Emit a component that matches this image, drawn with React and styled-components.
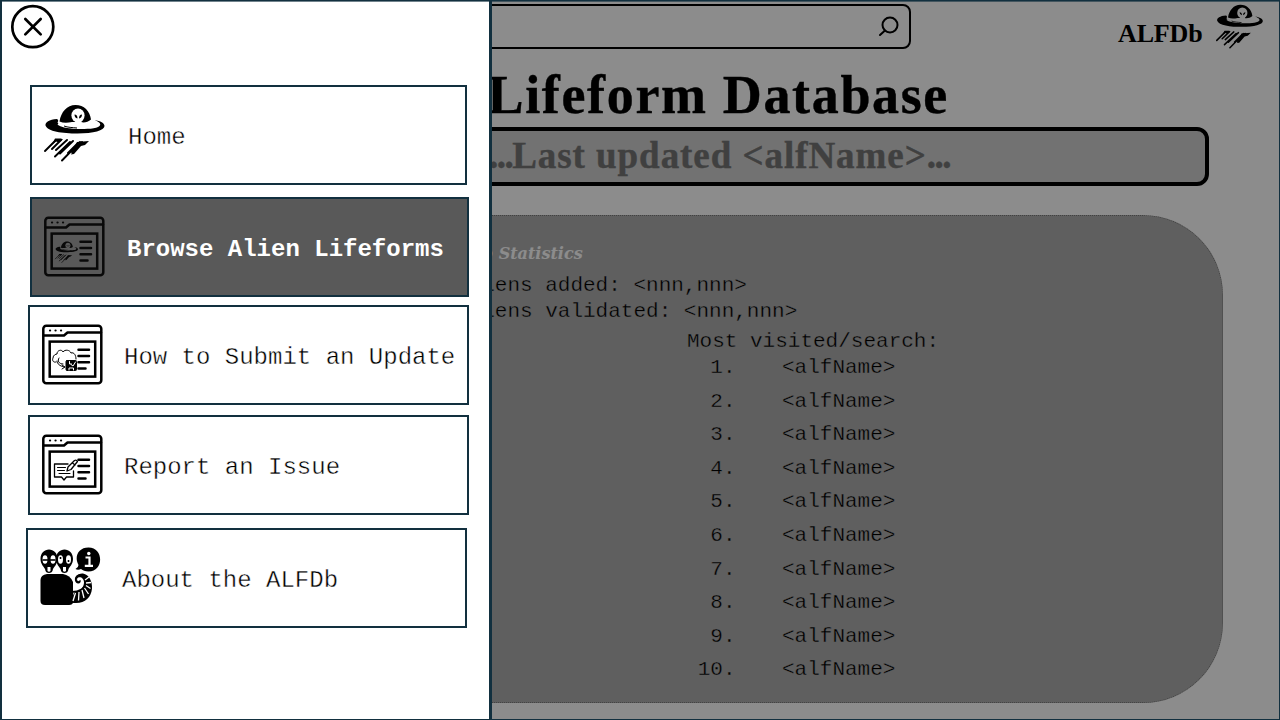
import React from "react";
import styled, { createGlobalStyle } from "styled-components";

const mono = '"Liberation Mono", "Courier New", monospace';
const display = '"Liberation Serif", "Times New Roman", serif';
const teal = "#12303f";

const Global = createGlobalStyle`
  *, *::before, *::after { box-sizing: border-box; }
  body { margin: 0; background: #fff; font-family: ${mono}; }
  h1, h2, p, ul, ol { margin: 0; padding: 0; list-style: none; }
`;

const Screen = styled.div`
  position: relative;
  width: 1280px;
  height: 720px;
  overflow: hidden;
  background: #fff;
`;

const Page = styled.div`
  height: 720px;
  padding: 4px 16px 16px 0;
  display: flex;
  flex-direction: column;
`;

const Header = styled.header`
  display: flex;
  height: 46px;
  justify-content: flex-end;
`;

const SearchBox = styled.div`
  width: 600px;
  height: 45px;
  margin-right: 207px;
  border: 2px solid #000;
  border-radius: 8px;
  display: flex;
  align-items: center;
  justify-content: flex-end;
  padding-right: 10px;
`;

const Brand = styled.div`
  display: flex;
  gap: 13px;
  width: 146px;
  font: bold 26px/30px ${display};
  white-space: nowrap;
`;

const BrandName = styled.span`
  padding-top: 15px;
  letter-spacing: -0.15px;
`;

const Title = styled.h1`
  height: 77px;
  padding: 14px 315px 0 0;
  text-align: right;
  white-space: nowrap;
  font: bold 54px/62px ${display};
  letter-spacing: 1.65px;
  -webkit-text-stroke: 0.4px #000;
`;

const UpdatedBar = styled.p`
  align-self: flex-end;
  width: 1137px;
  height: 59px;
  margin-right: 55px;
  padding-right: 255px;
  border: 4px solid #000;
  border-radius: 12px;
  background: #cfcfcf;
  color: #757575;
  text-align: right;
  white-space: nowrap;
  font: bold 37px/49px ${display};
  letter-spacing: 0.95px;
  -webkit-text-stroke: 0.4px #757575;
`;

const Dots = styled.span`
  letter-spacing: -1.5px;
`;

const StatsPanel = styled.section`
  align-self: flex-end;
  width: 1165px;
  height: 488px;
  margin: 29px 41px 0 0;
  padding: 27px 0 0 374px;
  border: 1px dotted #777;
  border-radius: 80px;
  background: #aeaeae;
  font-size: 21px;
  -webkit-text-stroke: 0.35px #aeaeae;
`;

const StatsTitle = styled.h2`
  color: #fff;
  font: italic bold 16px/22px "DejaVu Serif", serif;
  height: 30px;
  white-space: nowrap;
  -webkit-text-stroke: 0;
`;

const Stat = styled.p`
  height: 26px;
  line-height: 26px;
  padding-left: 24px;
  white-space: nowrap;
`;

const Ranking = styled.div`
  padding: 4px 0 0 254px;
  line-height: 26px;
`;

const RankList = styled.ol`
  display: flex;
  flex-direction: column;
  gap: 7.6px;
`;

const RankRow = styled.li`
  display: grid;
  grid-template-columns: 48.5px auto;
  column-gap: 46.5px;
  height: 26px;
`;

const RankNumber = styled.span`
  text-align: right;
`;

const Scrim = styled.div`
  position: absolute;
  inset: 0;
  background: rgba(0, 0, 0, 0.45);
`;

const Frame = styled.div`
  position: absolute;
  inset: 0;
  border: solid ${teal};
  border-width: 1px 1px 1px 2px;
  box-shadow: inset 0 1px 0 rgba(18, 48, 63, 0.6);
  pointer-events: none;
`;

const Drawer = styled.aside`
  position: absolute;
  inset: 0 auto 0 0;
  width: 492px;
  padding: 4px 0 0 10px;
  background: #fff;
  border-right: 3px solid ${teal};
`;

const CloseButton = styled.button`
  display: block;
  width: 46px;
  height: 46px;
  padding: 0;
  border: 0;
  background: none;
`;

const Menu = styled.nav`
  display: flex;
  flex-direction: column;
  padding-top: 35px;
`;

const MenuItem = styled.a`
  display: flex;
  align-items: center;
  flex: none;
  width: ${(p) => p.$width}px;
  height: 100px;
  margin: 0 0 ${(p) => p.$after}px ${(p) => p.$indent}px;
  border: 2px solid ${teal};
  background: ${(p) => (p.$active ? "#595959" : "#fff")};
  color: ${(p) => (p.$active ? "#fff" : "#000")};
  font: ${(p) => (p.$active ? "bold" : "normal")} 24px/28px ${mono};
  -webkit-text-stroke: ${(p) => (p.$active ? "0" : "0.4px #fff")};
  white-space: nowrap;
`;

const IconSlot = styled.span`
  width: ${(p) => p.$width}px;
  height: 62px;
  padding-left: 12px;
  flex: none;
`;

const Label = styled.span`
  padding-top: 5px;
`;

function UfoShapes({ hole = "#fff" }) {
  return (
    <>
      <path d="M15.500 17.500C17 8 23 1 31.500 1S46 7 47 15.500c-3 2.500-7 3.500-10 2.500H28c-5 1-9 1-12.500-.5z" />
      <ellipse cx="34" cy="11.500" rx="6.600" ry="7" fill={hole} />
      <path d="M31 15h7l-1 5h-5z" fill={hole} />
      <path d="M30.500 10.500q3 0 3 4-3-.5-3-4zM38 10.500q-3 0-3 4 3-.5 3-4z" />
      <path d="M13 15C5 15.500 1 18.500 1.500 21.500c2 6 17 8 32 8 16 0 27-3 27-7.500 0-3-4-5-10-6 5 2 7 4 5 6-3 3-13 3-22 3-10-1-18-3-20-6.500 1-1.500 1-2.500-.5-3.500z" />
      <path d="M14 20c5 3.500 11 3.500 19 4" fill="none" stroke={hole} strokeWidth="1.600" />
      <path d="M20 22c4 1.500 8 1.500 13 2" fill="none" stroke="currentColor" strokeWidth="1" />
      <g fill="none" stroke="currentColor" strokeWidth="1.900" strokeLinecap="round">
        <path d="M1 47L12 36M8 45l9-9M12 46l11-10M11 52.500L26 38M16 49.500L29 37M18 56.500L36 38M24 49l10-10M28 48l10-10" />
      </g>
      <path d="M11 34.500h6l2 1-4 3-3-1-4 3zM33 38l12-1-4 4-4 1-7 8-3 .5 3-6z" />
    </>
  );
}

function UfoIcon({ size = 62, hole }) {
  return (
    <svg width={size} height={size} viewBox="0 0 62 62" fill="currentColor">
      <UfoShapes hole={hole} />
    </svg>
  );
}

function WindowIcon({ children, color = "#000" }) {
  return (
    <svg width="62" height="62" viewBox="0 0 62 62" fill="none" stroke={color} color={color} strokeWidth="2.500" strokeLinecap="round" strokeLinejoin="round">
      <rect x="1.300" y="1.700" width="58" height="57.500" rx="3" />
      <path d="M2 11.500h20l3.500-3H59" />
      <path d="M8 6.500h.1M13.500 6.500h.1M19 6.500h.1" strokeWidth="2.200" />
      <rect x="7.700" y="17.600" width="45.500" height="35" strokeLinejoin="miter" />
      <path d="M36.500 25.700h10.500M36.500 32h10.500M36.500 38.200h10.500M36.500 44.500h7" />
      {children}
    </svg>
  );
}

function CloudSave() {
  return (
    <g strokeWidth="1">
      <path d="M14 38c-3 1-4-2-3-4 0-3 3-4 4-4 0-4 5-5 6-2 2-3 7-2 8 1 3-1 5 2 5 6M15 37c0 3 3 5 7 6M17 34c-2 3 0 6 4 6" />
      <path d="M20 41l3 2-3 2" />
      <rect x="24" y="36.500" width="10.500" height="10" rx="1" fill="currentColor" />
      <path d="M27.500 37.500v2.500h2M27 46v-2h4.500v2M29 40.500l2 1.500 2.500-4" stroke="#fff" />
    </g>
  );
}

function CommentPen() {
  return (
    <g strokeWidth="1.300">
      <path d="M26 30H12.500v13h7l2.500 3 2.500-3H31.500v-6" />
      <path d="M15.500 33.500h8M15.500 36.500h7M17 39.500h11" strokeWidth="1" />
      <path d="M25 37l1-4 6.500-6.500q2-1 3 1L29 35.500zM30.500 29l2.500 2" fill="#fff" />
    </g>
  );
}

function AlienInfoIcon() {
  return (
    <svg width="62" height="62" viewBox="0 0 62 62">
      <path d="M7 27h16q7 1 10 8v20q0 3-4 3H5q-4.500 0-4.500-4V33q0-5 6.500-6z" />
      <path d="M32 45c7 0 14-4 16-10" fill="none" stroke="#000" strokeWidth="2" />
      <path
        d="M39.500 33.500c1 2.500-3 2.500-3.500-.5-.5-4 4-6 8-4 5 3 5 12 1 18-3 5-7 7-13 7"
        fill="none" stroke="#000" strokeWidth="2.200"
      />
      <path d="M36 34c-2-4 2-8 7-7.500 6 1 9.500 8 9 15C51 52 43 58 31 55.500l3-10c6-1 10-5 10-10 0-4-3-6-6-5-2 1-2.500 2-2 3.500z" />
      <g stroke="#fff" strokeWidth="1.300">
        <path d="M35.500 46l-2.500 8M39 45l-.5 8.500M42 43l2 8M44.500 41l4 6M46 38.500l4.500 3M46 36l5-.5M45 33l4-3" />
      </g>
      {[0, 15.500].map((x) => (
        <g key={x} transform={`translate(${x} 0)`}>
          <path d="M.5 12C.5 6 4.500 2.500 9 2.500s8.500 3.500 8.500 9.500c0 5-3.500 8-4.500 10-.5 3-2 4-4 4s-3.500-1-4-4c-1-2-4.500-5-4.500-10z" />
          <ellipse cx="5" cy="12.500" rx="2.500" ry="4.200" fill="#fff" />
          <ellipse cx="13" cy="12.500" rx="2.500" ry="4.200" fill="#fff" />
          <path d="M7.500 20h3v4q-1.500 1.500-3 0z" fill="#fff" />
          <path d={x ? "M5 10v2M13 13v2" : "M2.500 13h13"} stroke="#000" strokeWidth="1.600" />
        </g>
      ))}
      <path d="M35.500 22q3-1.500 3-4C34 10 38 .5 48.500 .5 64 .5 64 24.500 48.500 24.500c-3.500 0-5.500-1-7.500-2.500-1.500.8-4 1-5.500 0z" />
      <path d="M45.500 10.500h4v8M44.800 18.800h8.200" fill="none" stroke="#fff" strokeWidth="2.200" />
      <circle cx="48.800" cy="6.500" r="1.700" fill="#fff" />
    </svg>
  );
}

const menu = [
  { label: "Home", indent: 20, width: 437, after: 12, slot: 96, icon: <UfoIcon /> },
  {
    label: "Browse Alien Lifeforms", indent: 20, width: 439, after: 8, slot: 95, active: true,
    icon: (
      <WindowIcon color="#090909">
        <g transform="translate(11 25) scale(.38)" fill="#090909" stroke="none">
          <UfoShapes hole="#595959" />
        </g>
      </WindowIcon>
    ),
  },
  { label: "How to Submit an Update", indent: 18, width: 441, after: 10, slot: 94, icon: <WindowIcon><CloudSave /></WindowIcon> },
  { label: "Report an Issue", indent: 18, width: 441, after: 13, slot: 94, icon: <WindowIcon><CommentPen /></WindowIcon> },
  { label: "About the ALFDb", indent: 16, width: 441, after: 0, slot: 94, icon: <AlienInfoIcon /> },
];

export default function App() {
  return (
    <Screen>
      <Global />
      <Page>
        <Header>
          <SearchBox>
            <svg width="22" height="22" viewBox="0 0 22 22" fill="none" stroke="#000" strokeWidth="2" strokeLinecap="round">
              <circle cx="13" cy="9" r="7.500" />
              <path d="M8 14.500l-5 4.500" />
            </svg>
          </SearchBox>
          <Brand>
            <BrandName>ALFDb</BrandName>
            <UfoIcon size={48} hole="#fff" />
          </Brand>
        </Header>
        <Title>Alien Lifeform Database</Title>
        <UpdatedBar>
          <Dots>...</Dots>Last updated &lt;alfName&gt;<Dots>...</Dots>
        </UpdatedBar>
        <StatsPanel>
          <StatsTitle>ALFDb Statistics</StatsTitle>
          <Stat>Aliens added: &lt;nnn,nnn&gt;</Stat>
          <Stat>Aliens validated: &lt;nnn,nnn&gt;</Stat>
          <Ranking>
            <p>Most visited/search:</p>
            <RankList>
              {Array.from({ length: 10 }, (_, i) => (
                <RankRow key={i}>
                  <RankNumber>{i + 1}.</RankNumber>
                  <span>&lt;alfName&gt;</span>
                </RankRow>
              ))}
            </RankList>
          </Ranking>
        </StatsPanel>
      </Page>
      <Scrim />
      <Drawer>
        <CloseButton aria-label="Close menu">
          <svg width="46" height="46" viewBox="0 0 46 46" fill="none" stroke="#000" strokeWidth="2.700" strokeLinecap="round">
            <circle cx="22.800" cy="22.700" r="20.500" />
            <path d="M15.300 15l15.400 15.400M30.700 15L15.300 30.400" />
          </svg>
        </CloseButton>
        <Menu>
          {menu.map((m) => (
            <MenuItem key={m.label} $active={m.active} $indent={m.indent} $width={m.width} $after={m.after}>
              <IconSlot $width={m.slot}>{m.icon}</IconSlot>
              <Label>{m.label}</Label>
            </MenuItem>
          ))}
        </Menu>
      </Drawer>
      <Frame />
    </Screen>
  );
}
